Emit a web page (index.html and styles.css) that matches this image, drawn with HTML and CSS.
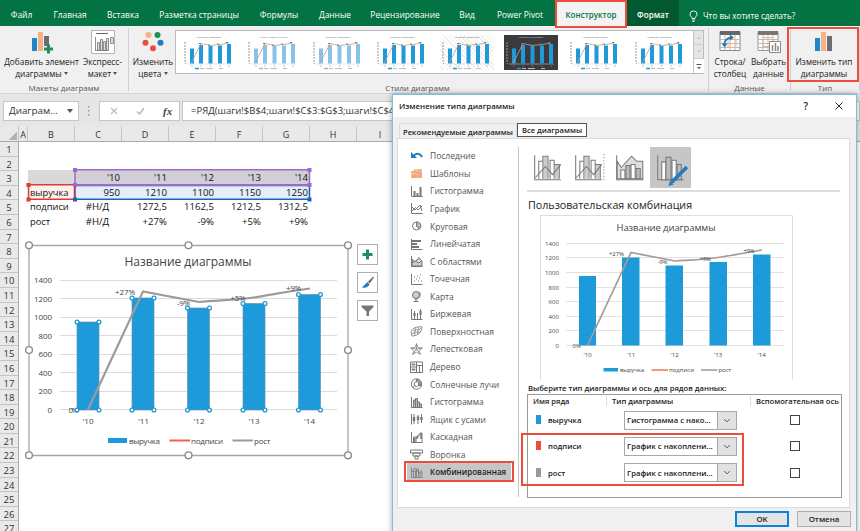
FILE: index.html
```html
<!DOCTYPE html>
<html lang="ru">

<head>
    <meta charset="UTF-8">
    <title>Изменение типа диаграммы</title>
    <link rel="stylesheet" href="styles.css">
</head>

<body>
    <svg class="defs" width="0" height="0">
        <symbol id="thumb" viewBox="0 0 54 34">
            <path d="M5 28.5H50" stroke="#ccc" stroke-width=".5" />
            <path d="M2 7.500H4M2 10.500H4M2 13.500H4M2 16.500H4M2 19.500H4M2 22.500H4M2 25.500H4M3 28H4" stroke="#999" stroke-width="1" />
            <path d="M8 13h4v15H8zM17 9.500h4V28h-4zM26.500 10.500h4V28h-4zM36 10h4v18h-4zM45 8.500h4V28h-4z" fill="currentColor" />
            <path d="M9 28L19 8L28 10L38 9L47 7.500" fill="none" stroke="#c79e86" stroke-width=".8" />
            <path d="M17 8h2M26 9.500h2M35 8.500h2M44 7h2" stroke="#777" />
            <path d="M9.500 30.500h1M18.500 30.500h1M28 30.500h1M37.500 30.500h1M46.500 30.500h1" stroke="#888" />
            <path d="M13 33h4" stroke="currentColor" stroke-width="1.500" />
            <path d="M18 33h4M28 33h3M37 33h4" stroke="#bbb" />
            <path d="M24 33h4" stroke="#f2b48c" />
        </symbol>
        <symbol id="chev" viewBox="0 0 10 10">
            <path d="M2 3.500L5 6.500L8 3.500" fill="none" stroke="#444" />
        </symbol>
    </svg>

    <div id="tabs">
        <span>Файл</span>
        <span>Главная</span>
        <span>Вставка</span>
        <span>Разметка страницы</span>
        <span>Формулы</span>
        <span>Данные</span>
        <span>Рецензирование</span>
        <span>Вид</span>
        <span>Power Pivot</span>
        <span class="current">Конструктор</span>
        <span class="format">Формат</span>
        <span class="tell">
            <svg width="9" height="12" viewBox="0 0 9 12">
                <path d="M3 8.500V7.500C1.500 6.500 1 5.500 1 4.200a3.500 3.300 0 0 1 7 0C8 5.500 7.500 6.500 6 7.500v1zM3 10h3M3.500 11.500h2" fill="none" stroke="#fff" stroke-width=".9" />
            </svg>
            Что вы хотите сделать?
        </span>
    </div>

    <div id="ribbon">
        <div class="group layouts">
            <div class="btns">
                <div class="btn add">
                    <svg width="22" height="24" viewBox="0 0 22 24">
                        <path d="M1 8h5v13H1z" fill="#1f86c9" />
                        <path d="M7 2h5v19H7z" fill="#f4b183" />
                        <path d="M13 6h5v10h-5z" fill="#6d6d6d" />
                        <path d="M13 19h9M17.500 14.500v9" stroke="#1d8f5f" stroke-width="3" />
                    </svg>
                    <b>Добавить элемент</b>
                    <b>диаграммы <i></i></b>
                </div>
                <div class="btn quick">
                    <svg width="24" height="24" viewBox="0 0 24 24">
                        <path d="M.5.500h23v23H.500z" fill="#fff" stroke="#b5b5b5" />
                        <path d="M5 3.500h12" stroke="#666" />
                        <path d="M4.500 7v14M4 20.500h13.500M6.500 12.500h2v8h-2zM9.500 9.500h2v11h-2zM12.500 11.500h2v9h-2zM15.500 8.500h2v12h-2zM19.500 7.500h3v6h-3z" fill="#ddd" stroke="#777" stroke-width=".8" />
                    </svg>
                    <b>Экспресс-</b>
                    <b>макет <i></i></b>
                </div>
            </div>
            <div class="caption">Макеты диаграмм</div>
        </div>
        <div class="group styles">
            <div class="btns">
                <div class="btn colors">
                    <svg width="22" height="24" viewBox="0 0 22 24">
                        <circle cx="6.500" cy="5" r="3" fill="#f4b183" />
                        <circle cx="15.500" cy="5" r="3" fill="#1d8f5f" />
                        <circle cx="3.500" cy="12.800" r="3" fill="#f04c3e" />
                        <circle cx="18.500" cy="12.800" r="3" fill="#1f7cc0" />
                        <circle cx="11" cy="18.300" r="3" fill="#f04c3e" />
                    </svg>
                    <b>Изменить</b>
                    <b>цвета <i></i></b>
                </div>
                <div id="gallery">
                    <div class="t">Название диаграммы<svg><use href="#thumb" /></svg></div>
                    <div class="t pale caps">Название диаграммы<svg><use href="#thumb" /></svg></div>
                    <div class="t pale">Название диаграммы<svg><use href="#thumb" /></svg></div>
                    <div class="t">Название диаграммы<svg><use href="#thumb" /></svg></div>
                    <div class="t hatch">Название диаграммы<svg><use href="#thumb" /></svg></div>
                    <div class="t dark">Название диаграммы<svg><use href="#thumb" /></svg></div>
                    <div class="t">Название диаграммы<svg><use href="#thumb" /></svg></div>
                    <div class="t">Название диаграммы<svg><use href="#thumb" /></svg></div>
                    <div class="scroll">
                        <svg width="10" height="14" viewBox="0 0 10 14"><path d="M3 8.500L5 6.500L7 8.500z" fill="#bbb" /></svg>
                        <svg width="10" height="14" viewBox="0 0 10 14"><path d="M3 6L5 8L7 6z" fill="#bbb" /></svg>
                        <svg width="10" height="14" viewBox="0 0 10 14"><path d="M2.500 5.500h5" stroke="#555" /><path d="M3 8L5 10L7 8z" fill="#555" /></svg>
                    </div>
                </div>
            </div>
            <div class="caption">Стили диаграмм</div>
        </div>
        <div class="group data">
            <div class="btns">
                <div class="btn swap">
                    <svg width="22" height="24" viewBox="0 0 22 24">
                        <path d="M1 1.500h20v19H1z" fill="#fff" stroke="#888" />
                        <path d="M1 1h20v4H1z" fill="#666" />
                        <path d="M1 9.500h20M1 13.500h20M1 17.500h20M6 5v15M11 5v15M16 5v15" stroke="#bbb" />
                        <path d="M9 9.500h8v8H9z" fill="none" stroke="#f4b183" />
                        <path d="M5.500 15C5 11 8 8 12 7.500" fill="none" stroke="#1f7cc0" stroke-width="1.800" />
                        <path d="M2.500 13.500h6L5.500 17.500zM11 4.500l4 3L11 10.500z" fill="#1f7cc0" />
                    </svg>
                    <b>Строка/</b>
                    <b>столбец</b>
                </div>
                <div class="btn pick">
                    <svg width="24" height="24" viewBox="0 0 24 24">
                        <path d="M1 1.500h20v19H1z" fill="#fff" stroke="#999" />
                        <path d="M1 1h20v4H1z" fill="#777" />
                        <path d="M1 9.500h20M1 13.500h20M1 17.500h20M6 5v15M11 5v15M16 5v15" stroke="#bbb" />
                        <path d="M6 7.500h10v9H6z" fill="none" stroke="#f4b183" />
                        <path d="M12.500 11.500h11v11h-11z" fill="#fff" stroke="#888" />
                        <path d="M15.500 15v6M18.500 13v8M21 16v5" stroke="#888" stroke-width="1.500" />
                    </svg>
                    <b>Выбрать</b>
                    <b>данные</b>
                </div>
            </div>
            <div class="caption">Данные</div>
        </div>
        <div class="group type">
            <div class="btns">
                <div class="btn change">
                    <svg width="20" height="24" viewBox="0 0 20 24">
                        <path d="M1 8h5v13H1z" fill="#1f86c9" />
                        <path d="M7 2h5v19H7z" fill="#f4b183" />
                        <path d="M13 6h5v15h-5z" fill="#6d6d6d" />
                    </svg>
                    <b>Изменить тип</b>
                    <b>диаграммы</b>
                </div>
            </div>
            <div class="caption">Тип</div>
        </div>
        <div class="mark mark-type"></div>
    </div>

    <div id="formula">
        <div class="name">Диаграм...<i></i></div>
        <svg class="dots" width="4" height="12" viewBox="0 0 4 12"><path d="M1 1h1.500v1.500H1zM1 5h1.500v1.500H1zM1 9h1.500v1.500H1z" fill="#999" /></svg>
        <div class="fx">
            <svg width="8" height="8" viewBox="0 0 8 8"><path d="M1 1L7 7M7 1L1 7" stroke="#bbb" stroke-width="1.200" /></svg>
            <svg width="9" height="8" viewBox="0 0 9 8"><path d="M1 4.500L3.500 7L8 1" fill="none" stroke="#bbb" stroke-width="1.500" /></svg>
            <em>fx</em>
        </div>
        <div class="input">=РЯД(шаги!$B$4;шаги!$C$3:$G$3;шаги!$C$4</div>
    </div>

    <div id="sheet">
        <div class="cols">
            <span class="corner"></span><span>A</span><span>B</span><span>C</span><span>D</span><span>E</span><span>F</span><span>G</span><span>H</span><span>I</span><span></span>
        </div>
        <div class="body">
            <div class="rows">
                <span>1</span><span>2</span><span>3</span><span>4</span><span>5</span><span>6</span><span>7</span><span>8</span><span>9</span>
                <span>10</span><span>11</span><span>12</span><span>13</span><span>14</span><span>15</span><span>16</span><span>17</span><span>18</span>
                <span>19</span><span>20</span><span>21</span><span>22</span><span>23</span><span>24</span><span>25</span><span>26</span><span>27</span>
            </div>
            <div class="cells">
                <div class="row head"><span></span><span>'10</span><span>'11</span><span>'12</span><span>'13</span><span>'14</span></div>
                <div class="row vals"><span>выручка</span><span>950</span><span>1210</span><span>1100</span><span>1150</span><span>1250</span></div>
                <div class="row"><span>подписи</span><span class="na">#Н/Д</span><span>1272,5</span><span>1162,5</span><span>1212,5</span><span>1312,5</span></div>
                <div class="row"><span>рост</span><span class="na">#Н/Д</span><span>+27%</span><span>-9%</span><span>+5%</span><span>+9%</span></div>
            </div>
        </div>

        <!-- рамки диапазонов -->
        <svg class="ranges" width="290" height="36" viewBox="24 166 290 36">
            <g fill="none" stroke-width="1.500">
                <path d="M75 169.700H309.500V185H75z" stroke="#9b6cc6" />
                <path d="M75 185.500H309.500V199.300H75z" stroke="#1c62c0" />
                <path d="M28.500 184.700H74.500V199.300H28.500z" stroke="#dc3a36" />
                <path d="M75 185H309.500" stroke="#9b6cc6" stroke-width="2" />
            </g>
            <path d="M73 168h4v4h-4zM307.500 168h4v4h-4zM73 183h4v4h-4zM307.500 183h4v4h-4z" fill="#9b6cc6" />
            <path d="M73 197.500h4v4h-4zM307.500 197.500h4v4h-4z" fill="#1c62c0" />
            <path d="M26.500 183h4v4h-4zM26.500 197.500h4v4h-4z" fill="#dc3a36" />
        </svg>

        <svg class="chart" width="328" height="220" viewBox="24 240 328 220">
            <path d="M29 245.500H348V455.500H29z" fill="#fff" stroke="#a6a6a6" stroke-width="1.300" />
            <text x="188" y="265.500" class="title" textLength="127">Название диаграммы</text>
            <path d="M60 280.500H337M60 298.500H337M60 317.500H337M60 335.500H337M60 354.500H337M60 372.500H337M60 391.500H337M60 409.500H337" stroke="#dcdcdc" />
            <g class="axis">
                <text x="52" y="283" textLength="18">1400</text>
                <text x="52" y="301.500" textLength="18">1200</text>
                <text x="52" y="320" textLength="18">1000</text>
                <text x="52" y="338.500" textLength="13.500">800</text>
                <text x="52" y="357" textLength="13.500">600</text>
                <text x="52" y="375.500" textLength="13.500">400</text>
                <text x="52" y="394" textLength="13.500">200</text>
                <text x="52" y="413">0</text>
                <text x="78" y="413" textLength="9.500">0%</text>
            </g>
            <path d="M77 322h22v88H77zM132 298h22v112h-22zM187.500 308h22v102h-22zM243 303.500h22V410h-22zM298.500 294.500h22V410h-22z" fill="#1c9ad9" stroke="#6e8fa8" stroke-width=".7" />
            <path d="M88 409.500L143 291.500L199 302C218 300 235 300.500 254 297.500S290 291 310 288.500" fill="none" stroke="#9f9a9a" stroke-width="2.200" />
            <g class="lbl">
                <text x="125" y="295" textLength="20">+27%</text>
                <text x="183.500" y="305.500" textLength="13">-9%</text>
                <text x="238" y="300.500" textLength="15">+5%</text>
                <text x="293.500" y="291" textLength="15">+9%</text>
                <text x="88" y="424">'10</text>
                <text x="143.500" y="424">'11</text>
                <text x="199" y="424">'12</text>
                <text x="254" y="424">'13</text>
                <text x="309.500" y="424">'14</text>
            </g>
            <path d="M108 438h19v5h-19z" fill="#1c9ad9" />
            <path d="M169.500 440.500H190" stroke="#f0604a" stroke-width="2" />
            <path d="M232.500 440.500H253" stroke="#9a9a9a" stroke-width="2" />
            <g class="legend">
                <text x="129" y="443.500" textLength="31">выручка</text>
                <text x="191" y="443.500" textLength="32">подписи</text>
                <text x="254" y="443.500" textLength="16.500">рост</text>
            </g>
            <g fill="#fff" stroke="#1c9ad9" stroke-width="1.300">
                <circle cx="77" cy="322" r="1.900" /><circle cx="99" cy="322" r="1.900" /><circle cx="77" cy="410" r="1.900" /><circle cx="99" cy="410" r="1.900" />
                <circle cx="132" cy="298" r="1.900" /><circle cx="154" cy="298" r="1.900" /><circle cx="132" cy="410" r="1.900" /><circle cx="154" cy="410" r="1.900" />
                <circle cx="187.500" cy="308" r="1.900" /><circle cx="209.500" cy="308" r="1.900" /><circle cx="187.500" cy="410" r="1.900" /><circle cx="209.500" cy="410" r="1.900" />
                <circle cx="243" cy="303.500" r="1.900" /><circle cx="265" cy="303.500" r="1.900" /><circle cx="243" cy="410" r="1.900" /><circle cx="265" cy="410" r="1.900" />
                <circle cx="298.500" cy="294.500" r="1.900" /><circle cx="320.500" cy="294.500" r="1.900" /><circle cx="298.500" cy="410" r="1.900" /><circle cx="320.500" cy="410" r="1.900" />
            </g>
            <g fill="#fff" stroke="#8c8c8c" stroke-width="1.400">
                <circle cx="29" cy="245.300" r="3.400" /><circle cx="188.500" cy="245.300" r="3.400" /><circle cx="348" cy="245.300" r="3.400" />
                <circle cx="29" cy="350" r="3.400" /><circle cx="348" cy="350" r="3.400" />
                <circle cx="29" cy="455.300" r="3.400" /><circle cx="188.500" cy="455.300" r="3.400" /><circle cx="348" cy="455.300" r="3.400" />
            </g>
        </svg>

        <div class="tools">
            <svg viewBox="0 0 19 19"><path d="M4.500 9.500h10M9.500 4.500v10" stroke="#1d8f5f" stroke-width="3" /></svg>
            <svg viewBox="0 0 19 19"><path d="M15.500 3.500L10 8.500l1.800 1.800L16 4.500z" fill="#666" /><path d="M9.500 9L4 14.500C7 15.500 11 14 11.500 11z" fill="#1f7cc0" /></svg>
            <svg viewBox="0 0 19 19"><path d="M3.500 4.500h12v1.500L11 10.500V15H8.500v-4.500L3.500 6z" fill="#777" /></svg>
        </div>
    </div>

    <div id="dialog">
        <div class="titlebar">
            <span>Изменение типа диаграммы</span>
            <b>?</b>
            <svg width="8" height="8" viewBox="0 0 8 8"><path d="M.5.500L7.500 7.500M7.500.500L.5 7.500" stroke="#222" /></svg>
        </div>
        <div class="dtabs">
            <span>Рекомендуемые диаграммы</span>
            <span class="current">Все диаграммы</span>
        </div>
        <div class="panel">
            <ul class="kinds">
                <li><svg viewBox="0 0 13 12"><path d="M1 2v6h6z" fill="#1f7cc0" stroke="none" /><path d="M3.500 6C6 3 10 3 12 7" fill="none" stroke="#1f7cc0" stroke-width="2" /></svg>Последние</li>
                <li><svg viewBox="0 0 13 12"><path d="M1 4h3V2h8v9H1z" fill="#f8c3a2" stroke="none" /><path d="M1.500 6L4 4L7 6L11 3M3 11V8M5 11V7M7 11V8M9 11V6M11 11V5" fill="none" stroke="#f08a60" /></svg>Шаблоны</li>
                <li><svg viewBox="0 0 13 12"><path d="M1.500 1v10.500H12.500" /><path d="M4.500 11V6M7.500 11V8M10.500 11V2" stroke-width="2" /></svg>Гистограмма</li>
                <li><svg viewBox="0 0 13 12"><path d="M1.500 1v10.500H12.500M2 9L5.500 5.500L8 8L12 4M2 5L5 8L10 3L12 9" /></svg>График</li>
                <li><svg viewBox="0 0 13 12"><circle cx="6.500" cy="6" r="4" /><path d="M6.500 2v4l3 3" /><path d="M6.500 2a4 4 0 0 1 3 7L6.500 6z" fill="#bbb" /></svg>Круговая</li>
                <li><svg viewBox="0 0 13 12"><path d="M1.500 1v10.500H12.500" /><path d="M2 3H11M2 6H7M2 9H9" stroke-width="2" /></svg>Линейчатая</li>
                <li><svg viewBox="0 0 13 12"><path d="M1.500 1v10.500H12.500" /><path d="M2 4L5 7L9 2.500L12 6v5H2zM2 8L5 6L9 8L12 5" fill="#ccc" /></svg>С областями</li>
                <li><svg viewBox="0 0 13 12"><path d="M1.500 1v10.500H12.500" /><path d="M4 4h1M7 3h1M10 2h1M4 8h1M6 6h1M9 5h1M8 8h1M11 8h1" stroke-width="1.200" /></svg>Точечная</li>
                <li><svg viewBox="0 0 13 12"><circle cx="6" cy="5" r="3.500" fill="#ccc" /><path d="M9 1.500C12 5 9 9 5 9.500M6 9.500v2M3.500 11.500h5" /></svg>Карта</li>
                <li><svg viewBox="0 0 13 12"><path d="M1.500 1v10.500H12.500M4.500 3v8M7.500 5v6M10.500 1v10" /><path d="M4.500 5v3M10.500 3v4" stroke-width="2.200" /></svg>Биржевая</li>
                <li><svg viewBox="0 0 13 12"><path d="M1 7C2 3 7 1 12 2C12 7 8 11 2 11zM3 6C6 4 9 6 11 3M2 9C5 6 8 9 11 6M5 3C6 6 4 8 5 10.500M8 2C9 5 7 7 8 9.500" stroke-width=".8" /></svg>Поверхностная</li>
                <li><svg viewBox="0 0 13 12"><path d="M6.500.500L8 4.500L12.500 5L9 7.500L10.500 11.500L6.500 9L2.500 11.500L4 7.500L.5 5L5 4.500zM6.500 1V6L12 5M6.500 6L10 11M6.500 6L3 11M6.500 6L1 5" stroke-width=".7" /></svg>Лепестковая</li>
                <li><svg viewBox="0 0 13 12"><path d="M.5 1h12v10.500H.500zM.500 6h6M6.500 1v10M6.500 4.500h6M9.500 4.500v7" /><path d="M2 3h3v1H2zM2 8h3v1H2z" /></svg>Дерево</li>
                <li><svg viewBox="0 0 13 12"><circle cx="6.500" cy="6" r="5.200" /><circle cx="6.500" cy="6" r="2.500" /><path d="M6.500 1v2.500M4.500 8L2.500 10M9 7l2.500 1" /><path d="M6.500 1.500a4.500 4.500 0 0 1 4 6L9 7C9 5 8 4 6.500 3.500z" fill="#aaa" /></svg>Солнечные лучи</li>
                <li><svg viewBox="0 0 13 12"><path d="M1.500 1v10.500H12.500" /><path d="M3.500 11V4h2v7M5.500 11V2.500h2V11M7.500 11V6h2v5M9.500 11V8h2v3" fill="#bbb" /></svg>Гистограмма</li>
                <li><svg viewBox="0 0 13 12"><path d="M1.500 1v10.500M4 1v10M8 2v9M11.500 1v9" /><path d="M4 4v4M8 3.500V7M11.500 4v3" stroke-width="2.400" /></svg>Ящик с усами</li>
                <li><svg viewBox="0 0 13 12"><path d="M1.500 1v10.500H12.500M3.500 11V6h2.500v5M8 7V4h2V2h2v9" /><path d="M4.500 7v4M7 5v3M11 2v6" stroke-width="1.500" /></svg>Каскадная</li>
                <li><svg viewBox="0 0 13 12"><path d="M.5 2h12v3H.500zM3 5h7v3H3zM5 8h3v3H5z" /></svg>Воронка</li>
                <li class="current"><svg viewBox="0 0 13 12"><path d="M1.500 1v10.500H12.500M3.500 11V5h2v6M6.500 11V3h2v8M10 11V6h2v5M2 6L5 2L9 7L12 4" stroke-width=".8" /></svg>Комбинированная</li>
            </ul>
            <div class="detail">
                <div class="variants">
                    <svg viewBox="0 0 40 40"><path d="M16 9.500h4V31h-4zM27 17h4v14h-4z" fill="#ccc" stroke="none" /><path d="M7.500 8v24H33M11.500 31V14h4v17M15.500 31V9h5v22M22.500 31V13h4v18M26.500 31V17h5v14" /><path d="M8 30L18 19L25 27L33 17" /></svg>
                    <svg viewBox="0 0 40 40"><path d="M16 9.500h4V31h-4zM27 17h4v14h-4z" fill="#ccc" stroke="none" /><path d="M7.500 8v24H33M11.500 31V14h4v17M15.500 31V9h5v22M22.500 31V13h4v18M26.500 31V17h5v14" /><path d="M8 30L18 19L25 27L33 17" /><path d="M35 7v25" stroke-dasharray="1 2" /></svg>
                    <svg viewBox="0 0 40 40"><path d="M7.500 8v24H33.500" /><path d="M8 14L12 20L22 9L27 14H33V31H8z" fill="#ddd" /><path d="M11.500 22.500h4V31h-4zM21.500 17h4v14h-4z" fill="#fff" /><path d="M16.500 18h4v13h-4zM26.500 21h4v10h-4z" fill="#bbb" /></svg>
                    <svg class="current" viewBox="0 0 40 40"><path d="M7.500 8v24H33" /><path d="M11.500 14.500h4V32h-4zM21.500 13h4v19h-4z" fill="#fff" /><path d="M15.500 10h5v22h-5zM26.500 17h4v15h-4z" fill="#bbb" /><path d="M36 19.500L21 34.500" stroke="#1f7cc0" stroke-width="3.500" /><path d="M18 38l1.500-5l3.500 3.500z" fill="#1f7cc0" stroke="none" /></svg>
                </div>
                <h3>Пользовательская комбинация</h3>
                <svg class="preview" width="254" height="167" viewBox="540 214 254 167">
                    <path d="M540.500 380V215.500H792.500V380" fill="#fff" stroke="#dedede" />
                    <text x="666" y="231" class="title" textLength="99">Название диаграммы</text>
                    <path d="M566 243.500H784M566 257.500H784M566 272.500H784M566 287.500H784M566 301.500H784M566 316.500H784M566 330.500H784M566 345.500H784" stroke="#e2e2e2" />
                    <g class="axis">
                        <text x="559" y="245.500" textLength="14">1400</text>
                        <text x="559" y="260" textLength="14">1200</text>
                        <text x="559" y="274.500" textLength="14">1000</text>
                        <text x="559" y="289.500" textLength="10.500">800</text>
                        <text x="559" y="304" textLength="10.500">600</text>
                        <text x="559" y="318.500" textLength="10.500">400</text>
                        <text x="559" y="333" textLength="10.500">200</text>
                        <text x="559" y="348">0</text>
                        <text x="581" y="348">0%</text>
                    </g>
                    <path d="M579 276h17v69.500h-17zM622 257.500h17.500v88H622zM665.500 265.500H683v80h-17.500zM709.500 262H727v83.500h-17.500zM753 254.500h17.500v91H753z" fill="#1c9ad9" />
                    <path d="M587.500 345.500L631 252.500L675 261C690 260 705 259.500 718 257.500S745 253 762 250" fill="none" stroke="#a39c99" stroke-width="1.700" />
                    <g class="lbl">
                        <text x="616.500" y="255.500" textLength="15">+27%</text>
                        <text x="662.500" y="264" textLength="10">-9%</text>
                        <text x="705.500" y="260.500" textLength="11">+5%</text>
                        <text x="749" y="253" textLength="11">+9%</text>
                        <text x="587.500" y="356.500">'10</text>
                        <text x="631" y="356.500">'11</text>
                        <text x="674.500" y="356.500">'12</text>
                        <text x="718" y="356.500">'13</text>
                        <text x="761.500" y="356.500">'14</text>
                    </g>
                    <path d="M603.500 368h14.500v3.500h-14.500z" fill="#1c9ad9" />
                    <path d="M651.500 370H668" stroke="#e8794f" stroke-width="1.500" />
                    <path d="M701 370H717.500" stroke="#9a9a9a" stroke-width="1.500" />
                    <g class="legend">
                        <text x="620" y="372" textLength="24">выручка</text>
                        <text x="669" y="372" textLength="25">подписи</text>
                        <text x="718.500" y="372" textLength="12.500">рост</text>
                    </g>
                </svg>
                <p>Выберите тип диаграммы и ось для рядов данных:</p>
                <div class="series">
                    <div class="line th"><span>Имя ряда</span><span>Тип диаграммы</span><span>Вспомогательная ось</span></div>
                    <div class="line"><span><i class="blue"></i>выручка</span><div class="select">Гистограмма с нако...<svg><use href="#chev" /></svg></div><i class="check"></i></div>
                    <div class="line"><span><i class="red"></i>подписи</span><div class="select">График с накоплени...<svg><use href="#chev" /></svg></div><i class="check"></i></div>
                    <div class="line"><span><i class="gray"></i>рост</span><div class="select">График с накоплени...<svg><use href="#chev" /></svg></div><i class="check"></i></div>
                </div>
            </div>
        </div>
        <div class="foot">
            <button class="ok">OK</button>
            <button>Отмена</button>
        </div>
        <div class="mark mark-kind"></div>
        <div class="mark mark-series"></div>
    </div>
</body>

</html>
```
FILE: styles.css
```css
* {
    box-sizing: border-box;
}

body {
    margin: 0px;
    width: 860px;
    height: 531px;
    overflow: hidden;
    position: relative;
    background: #fff;
    color: #333;
    font-family: "Open Sans", "Noto Sans", sans-serif;
    font-size: 9px;
}

ul,
p,
h3 {
    margin: 0px;
    padding: 0px;
}

b,
i,
em {
    font-weight: normal;
}

.defs {
    position: absolute;
}

.mark {
    position: absolute;
    border: 2px solid #f04c3e;
    z-index: 5;
}

/* вкладки ленты */
#tabs {
    display: grid;
    grid-template-columns: 43px 54px 52px 100px 60px 52px 88px 36px 70px 72px 52px 181px;
    height: 26px;
    background: #047344;
    color: #fff;
}

#tabs span {
    line-height: 29px;
    text-align: center;
    white-space: nowrap;
    font-size: 8.4px;
}

#tabs .current {
    height: 28px;
    line-height: 26px;
    background: #f3f3f3;
    color: #047344;
    border: 2px solid #f04c3e;
    font-weight: 600;
    font-size: 8px;
    position: relative;
    z-index: 2;
}

#tabs .format {
    background: #03592f;
    font-weight: 600;
    font-size: 8.1px;
}

#tabs .tell {
    display: flex;
    align-items: center;
    gap: 5px;
    padding: 3px 0 0 10px;
    line-height: 12px;
    font-size: 8.1px;
}

#ribbon {
    display: flex;
    height: 68px;
    padding-top: 2px;
    background: #f0f0f0;
    border-bottom: 1px solid #d5d5d5;
    position: relative;
}

.group {
    display: flex;
    flex-direction: column;
    height: 63px;
    border-right: 1px solid #d0d0d0;
}

.layouts {
    width: 129px;
}

.styles {
    width: 580px;
}

.data {
    width: 82px;
}

.type {
    width: 69px;
}

.btns {
    display: flex;
    height: 54px;
}

.caption {
    line-height: 12px;
    text-align: center;
    color: #555;
    font-size: 8px;
}

.styles .caption {
    padding-right: 2px;
}

.btn {
    display: flex;
    flex-direction: column;
    align-items: center;
    padding-top: 2px;
    height: 54px;
}

.btn b {
    line-height: 12px;
    white-space: nowrap;
    font-size: 8.3px;
    color: #222;
}

.btn b:first-of-type {
    margin-top: 2px;
}

.btn i,
.name i {
    display: inline-block;
    border: 2px solid transparent;
    border-top: 3px solid #555;
    border-bottom: 0;
    vertical-align: 2px;
}

.add {
    width: 83px;
}

.quick {
    width: 39px;
}

.colors {
    width: 46px;
    padding-left: 2px;
}

.swap {
    width: 42px;
}

.pick {
    width: 33px;
    margin-left: 1px;
}

.change {
    width: 66px;
}

#gallery {
    display: flex;
    align-items: center;
    width: 529px;
    height: 44px;
    margin-top: 2px;
    padding-left: 6px;
    gap: 10.4px;
    background: #fff;
    border: 1px solid #bbb;
}

#gallery .t {
    flex: none;
    display: grid;
    width: 54px;
    height: 35px;
    line-height: 5px;
    font-size: 2.400px;
    text-align: center;
    color: #666;
}

#gallery .t svg {
    width: 54px;
    height: 35px;
    margin-top: -5px;
    color: #1c9ad9;
}

#gallery .pale svg {
    color: #85c3ea;
}

#gallery .caps {
    text-transform: uppercase;
}

#gallery .hatch {
    background: repeating-linear-gradient(45deg, #fff 0 2px, #ececec 2px 3px);
}

#gallery .dark {
    background: #3c3a3f;
    color: #ccc;
}

.scroll {
    display: flex;
    flex-direction: column;
    width: 10px;
    margin-left: -4px;
    background: #e6e6e6;
    border-left: 1px solid #c4c4c4;
}

.scroll svg {
    border-bottom: 1px solid #ccc;
}

.scroll svg:last-child {
    background: #fff;
    border: 0;
}

.mark-type {
    left: 787px;
    top: 1px;
    width: 72px;
    height: 55px;
}

#formula {
    display: flex;
    height: 32px;
    padding: 7px 0 5px 3px;
    background: #e6e6e6;
}

#formula .name,
#formula .fx,
#formula .input {
    height: 20px;
    line-height: 18px;
    background: #fff;
    border: 1px solid #c6c6c6;
}

#formula .name {
    display: flex;
    align-items: center;
    justify-content: space-between;
    width: 76px;
    padding: 0 5px;
    font-size: 9.8px;
}

.name i {
    border-width: 4px 3px 0;
}

.dots {
    margin: 4px 8px;
}

#formula .fx {
    display: flex;
    align-items: center;
    width: 81px;
    padding-left: 10px;
    gap: 18px;
    margin-right: 2px;
}

.fx em {
    font: italic bold 11px "Liberation Serif", serif;
    color: #444;
}

#formula .input {
    flex: 1;
    padding-left: 8px;
    font-size: 9.5px;
    white-space: nowrap;
}

#sheet {
    height: 405px;
    overflow: hidden;
}

.cols {
    display: grid;
    grid-template-columns: 19px 9px repeat(9, 47px);
    height: 16px;
    background: #e9e9e9;
    border-bottom: 1px solid #ababab;
    overflow: hidden;
}

.cols span {
    border-right: 1px solid #c4c4c4;
    text-align: center;
    line-height: 17px;
    font-size: 9px;
}

.cols .corner {
    background: linear-gradient(135deg, transparent 50%, #b2b2b2 50%) 8px 5px / 9px 9px no-repeat;
}

.body {
    display: flex;
}

.rows {
    display: flex;
    flex-direction: column;
    width: 19px;
    background: #e9e9e9;
    border-right: 1px solid #ababab;
}

.rows span {
    height: 14.6px;
    line-height: 15px;
    border-bottom: 1px solid #c4c4c4;
    text-align: center;
    font-size: 9.5px;
}

.cells {
    padding: 28px 0 0 9px;
}

.row {
    display: grid;
    grid-template-columns: 47px repeat(5, 47px);
    height: 14.6px;
    line-height: 15px;
    font-size: 9.6px;
    color: #111;
}

.row span {
    text-align: right;
    padding-right: 2px;
}

.row span:first-child {
    text-align: left;
    padding-left: 2px;
    font-size: 9.3px;
}

.row .na {
    text-align: center;
}

.head {
    background: #d2ced8;
}

.head span:first-child {
    background: #d9d9d9;
}

.vals {
    background: #e4eef9;
}

.vals span:first-child {
    background: #fdf1ec;
}

.ranges {
    position: absolute;
    left: 24px;
    top: 166px;
}

.chart {
    position: absolute;
    left: 24px;
    top: 240px;
}

svg text {
    fill: #444;
}

.chart .title {
    font-size: 12px;
    text-anchor: middle;
}

.chart .axis,
.preview .axis {
    font-size: 8px;
    text-anchor: end;
}

.chart .lbl,
.preview .lbl {
    font-size: 8px;
    text-anchor: middle;
}

.chart .legend {
    font-size: 8px;
}

.preview .title {
    font-size: 9.5px;
    text-anchor: middle;
}

.preview .axis,
.preview .lbl,
.preview .legend {
    font-size: 6px;
}

.tools {
    position: absolute;
    left: 357px;
    top: 244px;
    display: flex;
    flex-direction: column;
    gap: 7px;
}

.tools svg {
    width: 21px;
    height: 21px;
    background: #fff;
    border: 1px solid #b0b0b0;
}

/* окно поверх листа */
#dialog {
    position: absolute;
    left: 392px;
    top: 94px;
    width: 465px;
    height: 440px;
    background: #f0f0f0;
    border: 1px solid #78c0ea;
    box-shadow: 0 0 6px rgba(0, 0, 0, .35);
    z-index: 3;
    color: #222;
}

.titlebar {
    display: flex;
    align-items: center;
    height: 22px;
    padding: 0 13px 0 6px;
    background: #fff;
}

.titlebar span {
    flex: 1;
    font-size: 7.9px;
    font-weight: 600;
}

.titlebar b {
    margin-right: 27px;
    font-size: 10px;
    font-weight: 600;
}

.dtabs {
    display: flex;
    align-items: flex-end;
    height: 21px;
    padding-left: 6px;
}

.dtabs span {
    height: 15px;
    line-height: 16px;
    width: 118px;
    border: 1px solid #dcdcdc;
    border-bottom: 0;
    text-align: center;
    white-space: nowrap;
    font-size: 7.6px;
    font-weight: 600;
}

.dtabs .current {
    width: 70px;
    height: 14px;
    line-height: 12px;
    margin: 0 0 1px;
    border: 1px solid #555;
    background: #fff;
}

.panel {
    display: flex;
    width: 453px;
    height: 370px;
    margin-left: 4px;
    background: #fff;
    border: 1px solid #dcdcdc;
}

.kinds {
    width: 121px;
    height: 350px;
    margin-top: 8px;
    padding-left: 9px;
    border-right: 1px solid #c8c8c8;
    list-style: none;
}

.kinds li {
    display: flex;
    align-items: center;
    height: 17.57px;
    padding-left: 3px;
    gap: 7px;
    font-size: 8.5px;
    color: #555;
    white-space: nowrap;
}

.kinds svg {
    flex: none;
    width: 13px;
    height: 12px;
    fill: none;
    stroke: #777;
}

.kinds .current {
    width: 104px;
    background: #c6c6c6;
    color: #222;
    font-weight: 600;
    font-size: 8px;
}

.detail {
    padding: 8px 0 0 8px;
}

.variants {
    display: flex;
    width: 313px;
    height: 45px;
    border-bottom: 2px solid #dedede;
}

.variants svg {
    width: 41px;
    height: 41px;
    fill: none;
    stroke: #777;
}

.variants .current {
    background: #c6c6c6;
}

.detail h3 {
    height: 22px;
    line-height: 26px;
    padding-left: 1px;
    font-size: 10.7px;
    font-weight: normal;
}

.preview {
    display: block;
    margin-left: 13px;
}

.detail p {
    height: 13px;
    line-height: 14px;
    padding-left: 1px;
    font-size: 7.65px;
    font-weight: 600;
}

.series {
    width: 315px;
    height: 104px;
    border: 1px solid #9a9a9a;
}

.line {
    display: grid;
    grid-template-columns: 96px 166px 12px;
    align-items: center;
    height: 26.3px;
    font-size: 7.7px;
    font-weight: 600;
}

.line.th {
    grid-template-columns: 79px 144px 91px;
    height: 12px;
    white-space: nowrap;
    font-size: 7.6px;
}

.th span {
    padding-left: 5px;
    border-right: 1px solid #ddd;
}

.th span:last-child {
    border: 0;
}

.line span i {
    display: inline-block;
    width: 5px;
    height: 9px;
    margin: 0 7px 0 8px;
    vertical-align: -1px;
}

.blue {
    background: #1c9ad9;
}

.red {
    background: #f04c3e;
}

.gray {
    background: #999;
}

.select {
    display: flex;
    justify-content: space-between;
    align-items: center;
    width: 113px;
    height: 19px;
    padding-left: 2px;
    border: 1px solid #a8a8a8;
    white-space: nowrap;
}

.select svg {
    width: 19px;
    height: 17px;
    padding: 4px;
    background: #e1e1e1;
    border-left: 1px solid #a8a8a8;
}

.check {
    width: 10px;
    height: 10px;
    border: 1px solid #444;
}

.foot {
    display: flex;
    justify-content: flex-end;
    gap: 8px;
    padding: 3px 5px 0 0;
}

.foot button {
    width: 54px;
    height: 16px;
    padding: 0;
    background: #e4e4e4;
    border: 1px solid #adadad;
    font: 600 7.9px "Open Sans", sans-serif;
    color: #222;
}

.foot .ok {
    border: 2px solid #0a84d8;
}

.mark-kind {
    left: 11px;
    top: 366px;
    width: 110px;
    height: 21px;
}

.mark-series {
    left: 128px;
    top: 338px;
    width: 223px;
    height: 53px;
}
```
